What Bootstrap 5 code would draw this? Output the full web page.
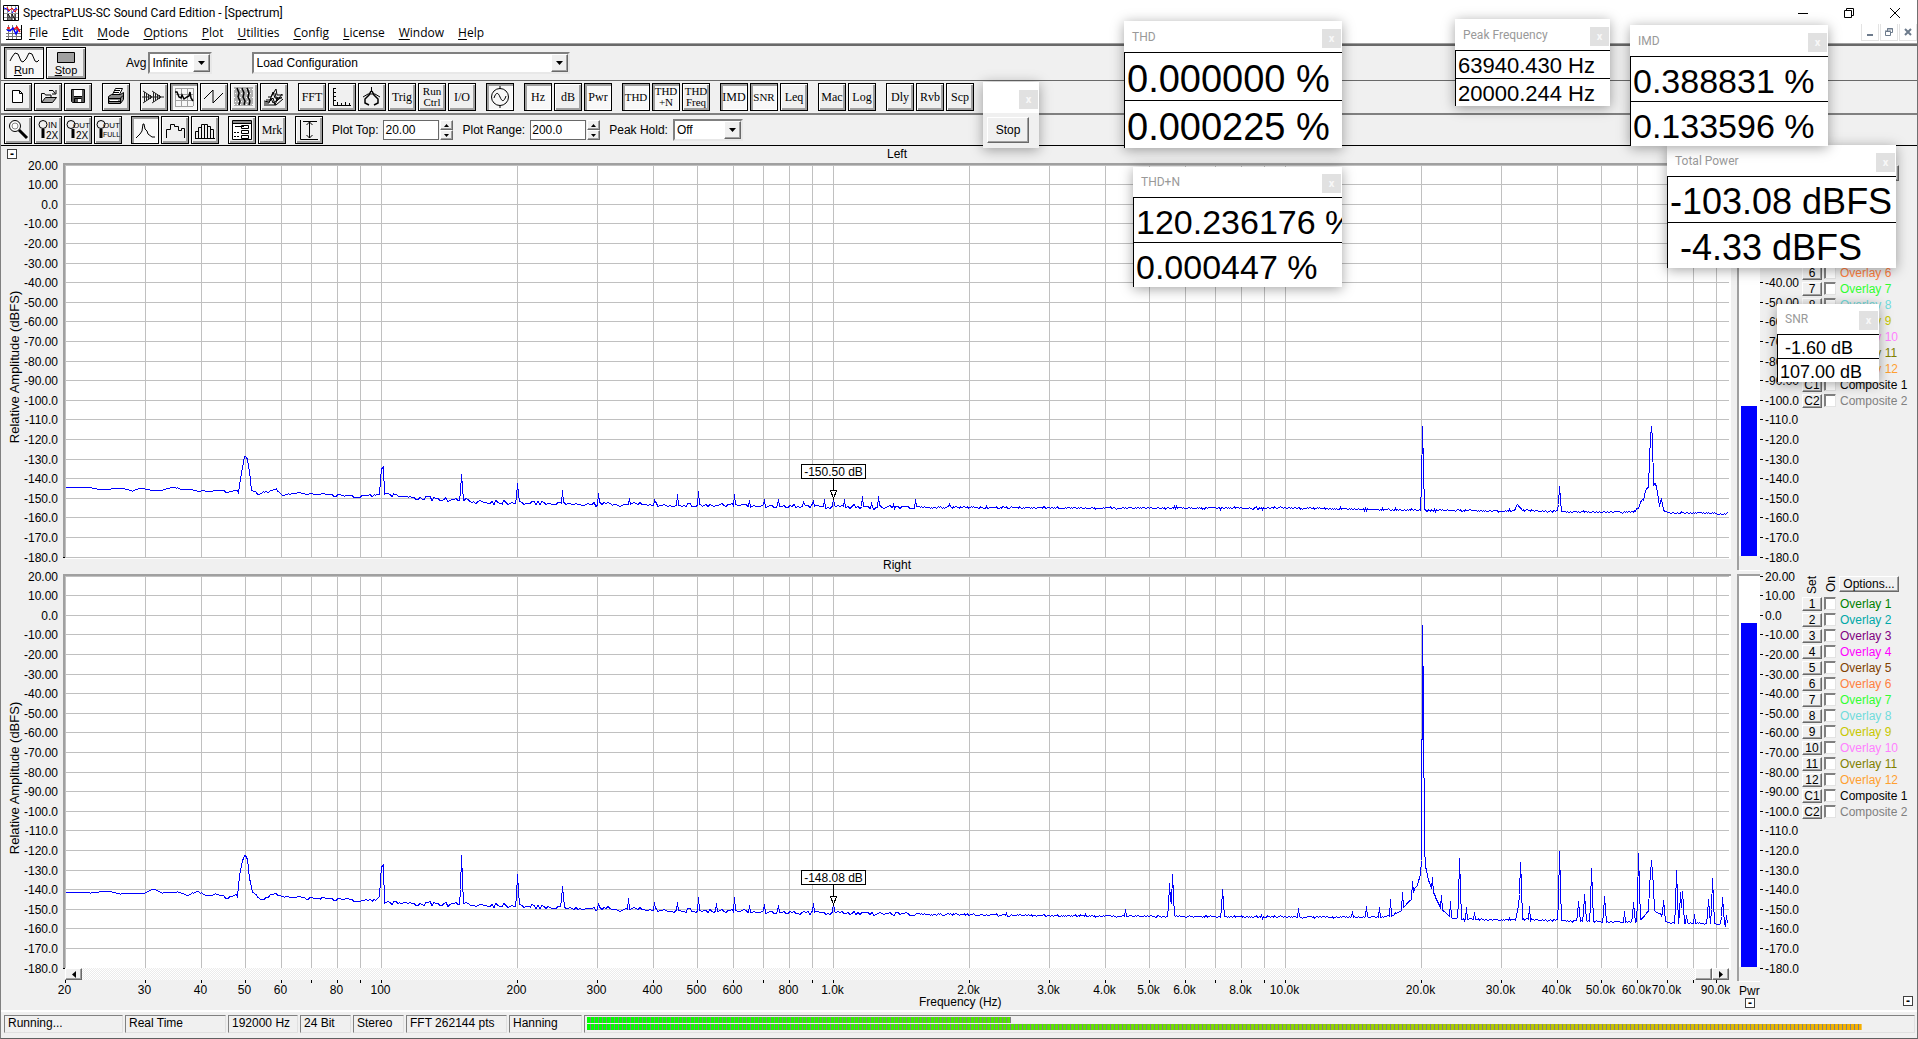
<!DOCTYPE html>
<html lang="en">
<head>
<meta charset="utf-8">
<meta name="viewport" content="width=device-width, initial-scale=1">
<title>SpectraPLUS-SC Sound Card Edition - [Spectrum]</title>
<link rel="stylesheet" href="https://cdn.jsdelivr.net/npm/bootstrap@5.3.0/dist/css/bootstrap.min.css">
<style>
:root{--face:#f0f0f0;--ui:"Liberation Sans",Arial,sans-serif;--chrome:"Open Sans","Noto Sans",sans-serif;--caption:Roboto,"Open Sans",sans-serif}
html,body{height:100%;overflow:hidden}
body{font-family:var(--ui);font-size:12px;line-height:14px;color:#000;background:var(--face)}
button,input,select{font:inherit;color:inherit;border-radius:0}
.app{border-left:1px solid #808080;border-right:1px solid #707070;border-bottom:1px solid #606060}
.caption-row{height:24px;background:#fff;font-family:var(--caption);padding:2px 14px 0 2px}
.menu-row{height:19px;background:#fff;font-family:var(--chrome);padding:0 0 2px 5px}
.menu-row nav{gap:14px;padding-left:7px}
.menu-row a{color:#000;text-decoration:none}
.menu-row u{text-underline-offset:2px}
.plain-btn{border:0;background:none;padding:0;display:flex;align-items:center;justify-content:center}
.sys-btns{gap:30px}
.mdi-set{gap:1px}
.mdi-btn{width:18px;height:17px;border:1px solid #e3e3e3;border-top:0;background:#fff;padding:0;display:flex;align-items:center;justify-content:center}
.divider-bar{height:3px;background:#696969;border-top:1px solid #a0a0a0}
.bar-1{padding:1px 3px;border-bottom:1px solid #696969;height:35px}
.bar-2{padding:2px 3px;border-bottom:2px solid #808080;height:34px;gap:10px}
.bar-3{padding:1px 3px;border-bottom:1px solid #000;height:31px;gap:9px}
.avg-label{margin:0 2px 0 40px}
.field-label{padding-right:5px}
.tool-set{display:flex;gap:2px}
.tool{width:28px;height:28px;padding:0;border:1px solid #000;background:var(--face);box-shadow:inset 1px 1px #fff,inset -2px -2px #a0a0a0;font:12px/12px "Liberation Serif","Times New Roman",serif;display:flex;align-items:center;justify-content:center;flex:none;white-space:nowrap}
.tool.two-line{font-size:11px;line-height:11px}
.tool.is-down{box-shadow:inset 2px 2px #a0a0a0,inset -1px -1px #fff;background:#f8f8f8}
.tool svg{display:block;flex:none}
.tool-wide{width:40px;height:32px;flex-direction:column;font:11px/12px var(--ui)}
svg{fill:none;stroke:#000;stroke-width:1}
.combo{display:flex;height:22px;background:#fff;border:2px solid;border-color:#808080 #e8e8e8 #e8e8e8 #808080}
.combo select{appearance:none;border:0;background:transparent;padding:0 0 0 2px;flex:1;min-width:0;outline:0}
.combo span,.spin button{background:var(--face);border:1px solid;border-color:#fff #696969 #696969 #fff;box-shadow:inset -1px -1px #a0a0a0;display:flex;align-items:center;justify-content:center}
.combo span{width:17px}
.combo-avg{width:64px}.combo-load{width:318px;margin-left:40px}.combo-peak{width:70px}
.num-box{width:56px;height:20px;border:1px solid #696969;background:#fff;padding:0 1px;outline:0}
.spin{display:flex;flex-direction:column;width:13px;height:20px;margin-left:1px}
.spin button{flex:1;padding:0}
.channel{min-height:200px}
.channel-name{height:17px;padding:1px 0 0 56px}
.fold{width:10px;height:10px;border:1px solid #404040;background:#fff;padding:0;font-size:12px;font-weight:700;line-height:7px;display:block}
.fold-top{position:absolute;left:6px;top:3px}
.chart{flex:1;min-width:0;height:100%;display:block;overflow:visible}
.meter{width:65px;height:100%;flex:none;display:block;overflow:visible}
.chart text,.meter text{fill:#000;stroke:none;font-size:12px}
.overlays{width:115px;padding-top:2px;flex:none}
.overlay-head{height:21px}
.upright{writing-mode:vertical-rl;transform:rotate(180deg);line-height:14px}
.upright-set{width:14px;margin-left:3px}
.upright-on{width:14px;margin:0 1px 0 5px}
.raised{background:var(--face);border:1px solid;border-color:#fff #696969 #696969 #fff;box-shadow:inset -1px -1px #a0a0a0;padding:0;line-height:12px}
.raised-options{width:60px;height:16px}
.overlay-item{height:16px}
.raised-set{width:20px;height:14px}
.tick-box{appearance:none;width:12px;height:13px;margin:0 4px 0 2px;background:#fff;border:1px solid;border-color:#808080 #e3e3e3 #e3e3e3 #808080;box-shadow:inset 1px 1px #808080}
.axis-zone{height:42px}
.pwr-foot{padding:16px 0 0 2px}
.pwr-foot .fold{margin-left:6px}
.scroller{height:12px;margin:0 8px 0 64px;background:repeating-conic-gradient(#fff 0 25%,#ebebeb 0 50%) 0 0/2px 2px}
.scroller button{width:17px;height:12px;display:flex;align-items:center;justify-content:center}
.axis-svg{display:block;width:100%;height:30px;overflow:visible}
.axis-svg text{fill:#000;stroke:none}
.status{border-top:2px solid #fff;padding:3px 2px 5px 3px;gap:2px;height:28px}
.cell{border:1px solid;border-color:#808080 #e0e0e0 #e0e0e0 #808080;height:18px;padding:0 3px;white-space:nowrap}
.cell-119{width:119px;flex:none}.cell-101{width:101px;flex:none}.cell-70{width:70px;flex:none}.cell-51{width:51px;flex:none}.cell-73{width:73px;flex:none}
.levels{padding:1px 2px;gap:1px}
.level{height:6px;flex:none;background:repeating-linear-gradient(90deg,transparent 0 3px,#808080 3px 4px),linear-gradient(90deg,#00ff00,#ffac00)}
.float-win{position:absolute;background:#fff;box-shadow:0 2px 12px rgba(0,0,0,.36);overflow:hidden;display:flex;flex-direction:column}
.float-cap{height:31px;flex:none;padding:7px 1px 0 8px;font:12px/18px var(--caption);color:#999;white-space:nowrap}
.float-close{width:19px;height:19px;margin-top:1px;border:0;background:#e1e1e1;color:#f8f8f8;padding:0;font-weight:700;font-size:11px;line-height:14px}
.reading{flex:1;border-top:1px solid #000;border-left:1px solid #000;display:flex;align-items:center;white-space:pre;padding:4px 0 0 2px;line-height:1}
.win-thd{left:1123px;top:21px;width:218px;height:127px;font-size:38px}
.win-thdn{left:1132px;top:167px;width:209px;height:120px;font-size:34px}
.win-peak{left:1454px;top:19px;width:155px;height:87px;font-size:22px}
.win-imd{left:1629px;top:25px;width:198px;height:121px;font-size:34px}
.win-power{left:1666px;top:145px;width:229px;height:123px;font-size:36px}
.win-peak .reading,.win-snr .reading{padding-top:2px}
.win-snr{left:1776px;top:304px;width:102px;height:78px;font-size:18px}
.win-snr .float-cap,.win-thdn .float-cap{height:30px;padding-top:6px}
.win-stop{left:982px;top:82px;width:56px;height:66px}
.stop-face{background:var(--face);flex:1;padding:4px}
.stop-face .raised{width:42px;height:26px}
</style>
<script src="https://cdn.jsdelivr.net/npm/bootstrap@5.3.0/dist/js/bootstrap.bundle.min.js"></script>
</head>
<body>
<div class="app d-flex flex-column h-100 position-relative overflow-hidden">

<header class="caption-row d-flex align-items-center">
  <svg width="16" height="16" viewBox="0 0 16 16"><path d="M.5.5h15v15H.5z" fill="#fff"/><path stroke="#999" d="M4.500 1v14M8.500 1v14M12.500 1v14M1 4.500h14M1 8.500h14M1 12.500h14"/><path stroke="#00f" d="M1 3l3 1 2 3M9 8l3-4 2-1"/><path stroke="#f00" d="M4 2l2 4 3-3 3 4 2-3"/><path d="M5 15V9l2 3v3M9 15V9l3 6V9"/></svg>
  <span class="ms-1">SpectraPLUS-SC Sound Card Edition - [Spectrum]</span>
  <div class="sys-btns d-flex ms-auto">
    <button class="plain-btn" aria-label="Minimize"><svg width="16" height="16"><path d="M3 8.500h10"/></svg></button>
    <button class="plain-btn" aria-label="Restore"><svg width="16" height="16"><path d="M3.500 5.500h7v7h-7zM5.500 5.500v-2h7v7h-2"/></svg></button>
    <button class="plain-btn" aria-label="Close"><svg width="16" height="16"><path d="M3 3l10 10M13 3L3 13"/></svg></button>
  </div>
</header>
<div class="menu-row d-flex align-items-center">
  <svg width="16" height="15" viewBox="0 0 16 15"><path d="M0 0h15v14H0z" fill="#fff" stroke="none"/><path stroke="#777" d="M2.500 0v14M6.500 0v14M10.500 0v14M0 4.500h15M0 8.500h15M0 11.500h15"/><path stroke="#00f" stroke-width="1.500" d="M1 5l3 1 3-3 3 6 3-5"/><path stroke="#f00" stroke-width="1.500" d="M1 3h3M8 4l3-2 3 5"/><path d="M15.500 0v14.500H0"/></svg>
  <nav class="d-flex" aria-label="Main menu">
    <a href="#"><u>F</u>ile</a><a href="#"><u>E</u>dit</a><a href="#"><u>M</u>ode</a><a href="#"><u>O</u>ptions</a><a href="#"><u>P</u>lot</a><a href="#"><u>U</u>tilities</a><a href="#"><u>C</u>onfig</a><a href="#"><u>L</u>icense</a><a href="#"><u>W</u>indow</a><a href="#"><u>H</u>elp</a>
  </nav>
  <div class="mdi-set d-flex ms-auto">
    <button class="mdi-btn" aria-label="Minimize chart"><svg width="10" height="10"><path stroke="#6d7b8c" stroke-width="2" d="M2 8h6"/></svg></button>
    <button class="mdi-btn" aria-label="Restore chart"><svg width="10" height="10"><path stroke="#6d7b8c" d="M1.500 4.500h5v4h-5zM1 4h6M3.500 4V1.500h5v4H7M3 2h6"/></svg></button>
    <button class="mdi-btn" aria-label="Close chart"><svg width="10" height="10"><path stroke="#6d7b8c" stroke-width="2" d="M2 2l6 6M8 2L2 8"/></svg></button>
  </div>
</div>
<div class="divider-bar"></div>

<div class="bar-1 d-flex align-items-center">
  <div class="tool-set">
    <button class="tool tool-wide is-down"><svg width="34" height="14"><path d="M3 11l2-4 3-4 3 1 3 7 2 1 3-3 3-6 3 1 3 7 2 1 2-2"/></svg><span><u>R</u>un</span></button>
    <button class="tool tool-wide"><svg width="34" height="14"><path fill="#a0a0a0" d="M8.500 2.500h17v10h-17z"/></svg><span><u>S</u>top</span></button>
  </div>
  <label for="avg" class="avg-label">Avg</label>
  <div class="combo combo-avg"><select id="avg"><option>Infinite</option></select><span><svg width="7" height="4"><path fill="#000" stroke="none" d="M0 0h7L3.500 4z"/></svg></span></div>
  <div class="combo combo-load"><select aria-label="Load Configuration"><option>Load Configuration</option></select><span><svg width="7" height="4"><path fill="#000" stroke="none" d="M0 0h7L3.500 4z"/></svg></span></div>
</div>

<div class="bar-2 d-flex">
  <div class="tool-set">
    <button class="tool" aria-label="New"><svg width="26" height="26"><path fill="#fff" d="M7.500 6.500h7l3 3v9h-10zM14.500 6.500v3h3"/></svg></button>
    <button class="tool" aria-label="Open"><svg width="26" height="26"><path d="M6.500 18V9.500h3l1 1.500h5.500v2.500M14 6.500h4l2 3M21 6v4h-4"/><path fill="#a0a0a0" d="M6.500 18.500l4-5h11l-4 5z"/></svg></button>
    <button class="tool" aria-label="Save"><svg width="26" height="26"><path fill="#555" d="M6.500 5.500h13v13h-12l-1-1z"/><path fill="#fff" stroke="none" d="M9 6h8v6H9zM13 15h3v3h-3z"/><path d="M9 12.500h8M9.500 18v-3.500h7"/></svg></button>
  </div>
  <div class="tool-set">
    <button class="tool" aria-label="Print"><svg width="26" height="26"><path fill="#fff" d="M9.500 10.500l3-6h7l-3 6M12 6.500h5M11 8.500h5"/><path fill="#888" d="M5.500 12.500l3-2h9l3-2v7l-3 4h-12z"/><path d="M6 14.500h11l3-3M6 17.500h11M17.500 14v5"/><path stroke="#fff" d="M7 16.500h8"/></svg></button>
  </div>
  <div class="tool-set">
    <button class="tool" aria-label="Time series"><svg width="26" height="26"><path d="M1 13h22M3.500 8v10M5.500 9v8M7.500 10v6M9.500 11v4M12.500 8v10M14.500 9v8M16.500 10v6M18.500 11v4M2 7l9 6-9 6M11 7l9 6-9 6" stroke="#222"/></svg></button>
    <button class="tool is-down" aria-label="Spectrum"><svg width="26" height="26"><path stroke="#a0a0a0" d="M4.500 4v18M10.500 4v18M16.500 4v18M22.500 4v18M4 4.500h18M4 10.500h18M4 16.500h18M4 22.500h18"/><path stroke-width="1.500" d="M4 8h2l2 5 2 1 1-3 2 4 3-2 2-1 1-4 1 6 2 3"/></svg></button>
    <button class="tool" aria-label="Phase"><svg width="26" height="26"><path d="M3 15l9-9v13L22 9"/></svg></button>
    <button class="tool" aria-label="Spectrogram"><svg width="26" height="26"><path fill="#b0b0b0" stroke="none" d="M3 3h19v19H3z"/><path stroke="#fff" stroke-dasharray="1 2" d="M3 5.500h19M4 9.500h18M3 13.500h19M4 17.500h18M3 20.500h19"/><path stroke-width="1.500" d="M6 4l2 5-1 4 2 4-1 4M11 4l2 5-1 4 2 4-1 4M16 4l2 5-1 4 2 4-1 4"/></svg></button>
    <button class="tool" aria-label="3-D surface"><svg width="26" height="26"><path d="M3 21h12l7-6M3 19h5l2-5 2 5 9-6M5 16h4l3-8 2 6h7M7 13h3l3-5M11 11l4-6 1 6h6M3 17l5 1 4-4 2 7 3-8M14 9l2 8 5-7"/></svg></button>
  </div>
  <div class="tool-set">
    <button class="tool">FFT</button>
    <button class="tool" aria-label="Scaling"><svg width="26" height="26"><path d="M4 4.500h3M4.500 4v17.500H22M4 8.500h3M4 12.500h3M4 16.500h3M8.500 21v-3M12.500 21v-2M16.500 21v-3M20.500 21v-2"/></svg></button>
    <button class="tool" aria-label="Calibration"><svg width="26" height="26"><path d="M12.500 3v5M4 13l5-3h7l5 3"/><path stroke-width="1.500" d="M12 7l-2 4-4 4v4l4 2M13 7l2 4 4 4v4l-4 2"/></svg></button>
    <button class="tool">Trig</button>
    <button class="tool two-line">Run<br>Ctrl</button>
    <button class="tool">I/O</button>
  </div>
  <div class="tool-set">
    <button class="tool is-down" aria-label="Signal generator"><svg width="26" height="26"><circle cx="13" cy="13" r="8.500"/><path d="M13 2v3M13 21v3M7 14c2-6 4-6 6-1s4 5 6-1"/></svg></button>
  </div>
  <div class="tool-set">
    <button class="tool is-down">Hz</button><button class="tool">dB</button><button class="tool is-down">Pwr</button>
  </div>
  <div class="tool-set">
    <button class="tool is-down two-line">THD</button><button class="tool is-down two-line">THD<br>+N</button><button class="tool two-line">THD<br>Freq</button>
  </div>
  <div class="tool-set">
    <button class="tool is-down">IMD</button><button class="tool is-down two-line">SNR</button><button class="tool">Leq</button>
  </div>
  <div class="tool-set">
    <button class="tool">Mac</button><button class="tool">Log</button>
  </div>
  <div class="tool-set">
    <button class="tool">Dly</button><button class="tool">Rvb</button><button class="tool">Scp</button>
  </div>
</div>

<div class="bar-3 d-flex">
  <div class="tool-set">
    <button class="tool" aria-label="Zoom"><svg width="26" height="26"><circle cx="10" cy="9" r="5.500" fill="#fff"/><circle cx="10" cy="9" r="3" stroke="#888"/><path stroke-width="3" d="M14 13l8 8"/></svg></button>
    <button class="tool" aria-label="Zoom in 2X"><svg width="26" height="26"><circle cx="8" cy="7.500" r="4"/><path stroke-width="3" d="M8 12v9"/><text x="13" y="11" font-size="9" fill="#000" stroke="none" font-family="Liberation Sans">IN</text><text x="11" y="22" font-size="10" fill="#000" stroke="none" font-family="Liberation Sans">2X</text></svg></button>
    <button class="tool" aria-label="Zoom out 2X"><svg width="26" height="26"><circle cx="6" cy="7.500" r="4"/><path stroke-width="3" d="M8 12v9"/><text x="8" y="11" font-size="8" fill="#000" stroke="none" font-family="Liberation Sans">OUT</text><text x="11" y="22" font-size="10" fill="#000" stroke="none" font-family="Liberation Sans">2X</text></svg></button>
    <button class="tool" aria-label="Zoom out full"><svg width="26" height="26"><circle cx="6" cy="7.500" r="4"/><path stroke-width="3" d="M6 12v9"/><text x="8" y="11" font-size="8" fill="#000" stroke="none" font-family="Liberation Sans">OUT</text><text x="8" y="20" font-size="7" fill="#000" stroke="none" font-family="Liberation Sans">FULL</text></svg></button>
  </div>
  <div class="tool-set">
    <button class="tool is-down" aria-label="Line plot"><svg width="26" height="26"><path d="M4 21l4-4 2-3 1-7h1l1 5 2 2 1 3 4 3h3"/></svg></button>
    <button class="tool" aria-label="Step plot"><svg width="26" height="26"><path d="M4.500 21v-8.500h4V7.500h4v2h4v4h3v-2h3V21"/></svg></button>
    <button class="tool" aria-label="Bar plot"><svg width="26" height="26"><path d="M3.500 21v-6.500h3V21M6.500 21V10.500h3V21M9.500 21V7.500h3V21M12.500 21V7.500h3V21M15.500 21v-11.500h3V21M18.500 21v-8.500h3V21M3 21.500h20"/></svg></button>
  </div>
  <div class="tool-set">
    <button class="tool" aria-label="Display options"><svg width="26" height="26"><path fill="#fff" d="M3.500 3.500h19v19h-19z"/><path stroke="#888" stroke-width="2" d="M4 5h18"/><path d="M4 6.500h18M6 9.500h9M12.500 8.500h7v3h-7zM12.500 13.500h7v3h-7zM12.500 18.500h7v3h-7z"/><path stroke-dasharray="2 1" d="M5 15.500h6M5 19.500h6"/></svg></button>
    <button class="tool">Mrk</button>
  </div>
  <div class="tool-set">
    <button class="tool" aria-label="Auto range"><svg width="26" height="26"><path d="M4.500 3v19.500H22M7 4.500h14M13.500 5v16M10.500 8l3-3 3 3M10.500 18l3 3 3-3"/></svg></button>
  </div>
  <div class="d-flex align-items-center">
    <label for="top" class="field-label">Plot Top:</label><input id="top" class="num-box" value="20.00">
    <div class="spin"><button aria-label="Top up"><svg width="5" height="3"><path fill="#000" stroke="none" d="M0 3h5L2.500 0z"/></svg></button><button aria-label="Top down"><svg width="5" height="3"><path fill="#000" stroke="none" d="M0 0h5L2.500 3z"/></svg></button></div>
  </div>
  <div class="d-flex align-items-center">
    <label for="range" class="field-label">Plot Range:</label><input id="range" class="num-box" value="200.0">
    <div class="spin"><button aria-label="Range up"><svg width="5" height="3"><path fill="#000" stroke="none" d="M0 3h5L2.500 0z"/></svg></button><button aria-label="Range down"><svg width="5" height="3"><path fill="#000" stroke="none" d="M0 0h5L2.500 3z"/></svg></button></div>
  </div>
  <div class="d-flex align-items-center">
    <label for="hold" class="field-label">Peak Hold:</label>
    <div class="combo combo-peak"><select id="hold"><option>Off</option></select><span><svg width="7" height="4"><path fill="#000" stroke="none" d="M0 0h7L3.500 4z"/></svg></span></div>
  </div>
</div>

<main class="flex-grow-1 d-flex flex-column" id="spectrum">
  <section class="channel flex-fill d-flex flex-column" data-channel="0">
    <div class="channel-name d-flex position-relative"><button class="fold fold-top" aria-label="Collapse">-</button><div class="flex-fill text-center">Left</div><div class="overlays p-0"></div><div class="meter"></div></div>
    <div class="d-flex flex-fill"><svg class="chart"></svg><svg class="meter"></svg><div class="overlays" data-list></div></div>
  </section>
  <section class="channel flex-fill d-flex flex-column" data-channel="1">
    <div class="channel-name d-flex"><div class="flex-fill text-center">Right</div><div class="overlays p-0"></div><div class="meter"></div></div>
    <div class="d-flex flex-fill"><svg class="chart"></svg><svg class="meter"></svg><div class="overlays" data-list></div></div>
  </section>
  <div class="axis-zone d-flex">
    <div class="flex-fill">
      <div class="scroller d-flex"><button class="raised me-auto" aria-label="Scroll left"><svg width="4" height="7"><path fill="#000" stroke="none" d="M4 0v7L0 3.500z"/></svg></button><button class="raised" aria-label="Scroll thumb"></button><button class="raised" aria-label="Scroll right"><svg width="4" height="7"><path fill="#000" stroke="none" d="M0 0v7l4-3.500z"/></svg></button></div>
      <svg class="axis-svg" id="freqAxis"></svg>
    </div>
    <div class="meter pwr-foot"><div>Pwr</div><button class="fold" aria-label="Collapse power">-</button></div>
    <div class="overlays d-flex justify-content-end align-items-end pe-1 pb-1"><button class="fold" aria-label="Collapse overlays">-</button></div>
  </div>
</main>

<footer class="status d-flex">
  <div class="cell cell-119">Running...</div><div class="cell cell-101">Real Time</div><div class="cell cell-70">192000 Hz</div><div class="cell cell-51">24 Bit</div><div class="cell cell-51">Stereo</div><div class="cell cell-101">FFT 262144 pts</div><div class="cell cell-73">Hanning</div>
  <div class="cell levels flex-fill d-flex flex-column"><div class="level" style="clip-path:inset(0 68% 0 0)"></div><div class="level" style="clip-path:inset(0 3.8% 0 0)"></div></div>
</footer>

<section class="float-win win-stop"><div class="float-cap d-flex"><button class="float-close ms-auto" aria-label="Close generator">x</button></div><div class="stop-face"><button class="raised">Stop</button></div></section>
<section class="float-win win-power"><div class="float-cap d-flex">Total Power<button class="float-close ms-auto" aria-label="Close Total Power">x</button></div><div class="reading">-103.08 dBFS</div><div class="reading"> -4.33 dBFS</div></section>
<section class="float-win win-thdn"><div class="float-cap d-flex">THD+N<button class="float-close ms-auto" aria-label="Close THD+N">x</button></div><div class="reading">120.236176 %</div><div class="reading">0.000447 %</div></section>
<section class="float-win win-thd"><div class="float-cap d-flex">THD<button class="float-close ms-auto" aria-label="Close THD">x</button></div><div class="reading">0.000000 %</div><div class="reading">0.000225 %</div></section>
<section class="float-win win-peak"><div class="float-cap d-flex">Peak Frequency<button class="float-close ms-auto" aria-label="Close Peak Frequency">x</button></div><div class="reading">63940.430 Hz</div><div class="reading">20000.244 Hz</div></section>
<section class="float-win win-imd"><div class="float-cap d-flex">IMD<button class="float-close ms-auto" aria-label="Close IMD">x</button></div><div class="reading">0.388831 %</div><div class="reading">0.133596 %</div></section>
<section class="float-win win-snr"><div class="float-cap d-flex">SNR<button class="float-close ms-auto" aria-label="Close SNR">x</button></div><div class="reading"> -1.60 dB</div><div class="reading">107.00 dB</div></section>
</div>

<script>
// Traces are stored on a 1664 x 392 grid: x runs 20 Hz to 94 kHz (log), y runs +20 to -180 dB.
const GX = 1664, GY = 392, LEFT = 64, RIGHT = 8, TOP = 2;
const traces = [
 {power:-103.08, marker:"-150.50 dB", markY:301,
  base:[[0,323],[12,322],[22,322],[32,324],[45,324],[56,323],[67,326],[75,323],[85,325],[97,325],[108,322],[115,325],[130,325],[145,326],[160,326],[172,327],[173,327],[176,308],[178,297],[179,291],[182,294],[184,306],[186,325],[193,328],[198,325],[204,328],[211,326],[217,330],[230,328],[250,329],[280,331],[310,330],[314,329],[316,301],[318,301],[319,328],[340,332],[370,334],[400,336],[460,338],[520,339],[600,340],[720,341],[800,342],[1000,343],[1220,343],[1350,345],[1440,346],[1449,346],[1451,340],[1453,341],[1456,345],[1495,347],[1568,347],[1573,343],[1576,335],[1578,335],[1580,325],[1583,322],[1584,294],[1585,272],[1586,261],[1587,273],[1588,320],[1590,318],[1592,326],[1594,342],[1596,333],[1598,345],[1602,348],[1640,348],[1658,349],[1664,348]],
  spikes:[[396,309],[452,318],[497,325],[533,328],[564,333],[589,335],[612,329],[633,326],[669,329],[684,335],[699,334],[713,334],[738,337],[748,335],[759,334],[768,332],[779,334],[797,331],[806,338],[813,331],[828,339],[850,334],[884,339],[1357,261],[1494,321]]},
 {power:-4.33, marker:"-148.08 dB", markY:296,
  base:[[0,316],[25,317],[42,315],[55,318],[79,317],[88,313],[97,317],[110,316],[123,320],[132,314],[140,319],[150,318],[160,321],[172,320],[174,300],[177,284],[179,279],[182,283],[184,302],[187,316],[196,322],[210,320],[265,323],[310,324],[314,320],[316,288],[318,288],[319,326],[355,328],[435,329],[475,331],[535,333],[640,335],[775,337],[915,339],[1035,340],[1220,341],[1315,341],[1325,340],[1335,335],[1340,329],[1346,323],[1349,313],[1352,309],[1355,298],[1356,284],[1357,49],[1358,130],[1359,270],[1360,290],[1363,304],[1367,315],[1371,323],[1376,333],[1381,338],[1387,342],[1400,343],[1450,344],[1453,330],[1455,333],[1457,343],[1495,345],[1573,346],[1577,342],[1581,337],[1583,335],[1584,310],[1586,284],[1588,310],[1589,335],[1595,338],[1598,344],[1602,347],[1664,348]],
  spikes:[[396,279],[452,298],[497,310],[533,327],[563,322],[589,326],[612,326],[633,321],[651,327],[669,321],[684,329],[699,328],[713,329],[748,327],[768,325],[1060,333],[1104,307],[1107,298],[1157,313],[1233,332],[1287,335],[1301,330],[1314,331],[1325,323],[1337,316],[1347,305],[1367,301],[1376,319],[1385,325],[1394,282],[1401,331],[1409,336],[1455,286],[1464,330],[1494,275],[1513,325],[1519,318],[1526,292],[1539,320],[1559,335],[1568,326],[1573,277],[1598,324],[1611,294],[1615,316],[1617,315],[1621,339],[1629,338],[1643,323],[1647,302],[1657,321],[1661,339]]}];
const overlays = [["1","Overlay 1","#008000"],["2","Overlay 2","#00a8a8"],["3","Overlay 3","#800080"],["4","Overlay 4","#ff00ff"],["5","Overlay 5","#804000"],["6","Overlay 6","#ff8040"],["7","Overlay 7","#30ff30"],["8","Overlay 8","#70dcdc"],["9","Overlay 9","#c8c800"],["10","Overlay 10","#ff80ff"],["11","Overlay 11","#808000"],["12","Overlay 12","#ffa030"],["C1","Composite 1","#000"],["C2","Composite 2","#808080"]];

const freqs = [];
for (const d of [10,100,1000,10000]) for (let k = 1; k < 10; k++) if (d*k >= 20) freqs.push(d*k);
const fx = (f,w) => Math.round(LEFT + (w-LEFT-RIGHT) * Math.log10(f/20) * 452 / GX) + .5;
const dbLabel = v => v === 0 ? "0.0" : Math.abs(v) >= 100 ? v.toFixed(1) : v.toFixed(2);

function tracePath(t, w, h) {
  let seed = 7, n = 0; const rnd = () => (seed = seed*16807 % 2147483647) / 2147483647;
  const ys = []; let i = 0;
  for (let x = 0; x < GX-1; x++) {
    while (i < t.base.length-2 && t.base[i+1][0] <= x) i++;
    const [x0,y0] = t.base[i], [x1,y1] = t.base[i+1];
    const amp = x < 110 ? 0 : x < 850 ? 2.4 : 1.3, hold = x < 300 ? 4 : x < 850 ? 2 : 1;
    if (x % hold === 0) n = (rnd()+rnd()-1) * amp;
    const y = y0 + (y1-y0)*(x-x0)/(x1-x0);
    ys.push(y + (Math.abs(y1-y0) > 9 ? 0 : n));
  }
  for (const [x,y] of t.spikes) {
    const b = ys[x];
    if (b-y > 18) { ys[x-1] = Math.min(ys[x-1], b-(b-y)*.3); ys[x+1] = Math.min(ys[x+1], b-(b-y)*.5); }
    ys[x] = y;
  }
  return "M" + ys.map((y,x) => (LEFT+.5 + x*(w-LEFT-RIGHT)/GX).toFixed(1) + " " + (Math.floor(TOP + y*h/GY)+.5)).join("L");
}

function draw() {
  document.querySelectorAll("[data-channel]").forEach(sec => {
    const t = traces[sec.dataset.channel], chart = sec.querySelector("svg.chart"), meter = sec.querySelector("svg.meter");
    const w = chart.clientWidth, h = chart.clientHeight - TOP, r = w - RIGHT;
    let s = `<rect x="${LEFT}" y="1" width="${r-LEFT+2}" height="${h+3}" fill="#fff" stroke="none"/>`;
    let m = `<rect x="2" y="1" width="21" height="${h}" fill="#fff" stroke="none"/><path stroke="#a0a0a0" stroke-width="2" d="M1 ${h+15}V1H23"/><path stroke="#fff" d="M2 ${h+15.5}h21"/>`;
    for (const f of freqs) s += `<path stroke="#c0c0c0" d="M${fx(f,w)} 2V${h+2}"/>`;
    for (let k = 0; k <= 20; k++) {
      const v = 20-k*10, y = Math.floor(TOP + h*k/20)+.5;
      s += `<path stroke="#c0c0c0" d="M${LEFT} ${y}H${r}"/><path d="M${LEFT-2} ${y}h2"/><text x="57" y="${y+4}" text-anchor="end">${dbLabel(v)}</text>`;
      m += `<path d="M23 ${y}h3"/><text x="28" y="${y+4}">${dbLabel(v)}</text>`;
    }
    s += `<path stroke="#a0a0a0" stroke-width="2" d="M${LEFT-1} ${h+2}V1H${r+2}"/>`;
    s += `<text style="font-size:13px" text-anchor="middle" transform="translate(18 ${TOP+h/2+6}) rotate(-90)">Relative Amplitude (dBFS)</text>`;
    s += `<path stroke="#00f" d="${tracePath(t,w,h)}"/>`;
    const mx = fx(1000,w), my = Math.round(t.markY*h/GY);
    s += `<rect x="${mx-32}" y="${my+.5}" width="64" height="14" fill="#fff"/><text x="${mx}" y="${my+12}" text-anchor="middle">${t.marker}</text><path fill="#fff" d="M${mx} ${my+15}v11M${mx-3} ${my+26.5}h6l-3 8z"/>`;
    const by = Math.floor(TOP + h*(20-t.power)/200);
    m += `<rect x="4" y="${by}" width="16" height="${h+1-by}" fill="#00f" stroke="none"/>`;
    chart.innerHTML = `<g shape-rendering="crispEdges">${s}</g>`;
    meter.innerHTML = `<g shape-rendering="crispEdges">${m}</g>`;
  });
  const ax = document.getElementById("freqAxis"), w = ax.clientWidth;
  ax.innerHTML = freqs.map(f => {
    const x = fx(f,w), hide = [70,90,700,900,7000,9000,80000].includes(f);
    return `<path shape-rendering="crispEdges" d="M${x} 0v3"/>` + (hide ? "" : `<text x="${x-1}" y="14" text-anchor="middle">${f >= 1000 ? (f/1000).toFixed(1)+"k" : f}</text>`);
  }).join("") + `<text x="${LEFT+(w-LEFT-RIGHT)*.538}" y="26" text-anchor="middle">Frequency (Hz)</text>`;
}
document.querySelectorAll("[data-channel]").forEach(sec => {
  const c = sec.dataset.channel;
  sec.querySelector("[data-list]").innerHTML =
    `<div class="overlay-head d-flex align-items-start"><span class="upright upright-set">Set</span><span class="upright upright-on">On</span><button class="raised raised-options">Options...</button></div>` +
    overlays.map(([n,name,col],i) => `<div class="overlay-item d-flex"><button class="raised raised-set">${n}</button><input type="checkbox" class="tick-box" id="ov${c}-${i}"><label for="ov${c}-${i}" style="color:${col}">${name}</label></div>`).join("");
});
draw();
addEventListener("resize", draw);
</script>
</body>
</html>
